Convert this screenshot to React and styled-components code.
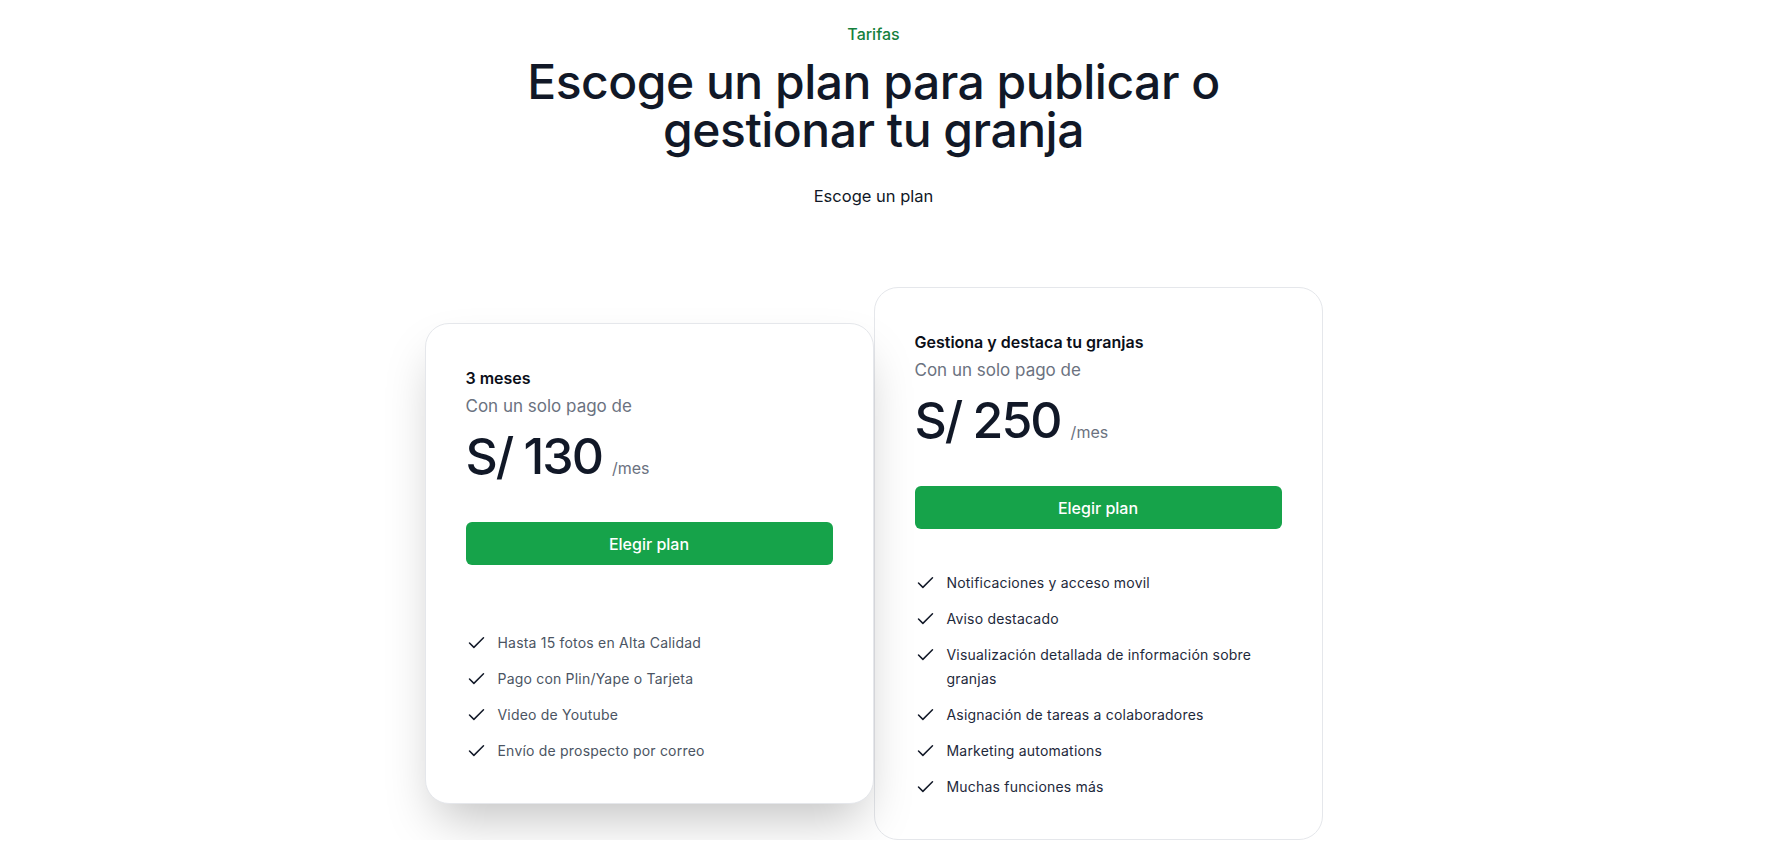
import React from "react";
import styled, { createGlobalStyle } from "styled-components";

const GlobalStyle = createGlobalStyle`
  body {
    margin: 0;
    background: #ffffff;
    font-family: Inter, "Liberation Sans", sans-serif;
    -webkit-font-smoothing: antialiased;
  }
`;

const plans = [
  {
    name: "3 meses",
    price: "S/ 130",
    featured: true,
    features: [
      "Hasta 15 fotos en Alta Calidad",
      "Pago con Plin/Yape o Tarjeta",
      "Video de Youtube",
      "Envío de prospecto por correo",
    ],
  },
  {
    name: "Gestiona y destaca tu granjas",
    price: "S/ 250",
    featured: false,
    features: [
      "Notificaciones y acceso movil",
      "Aviso destacado",
      "Visualización detallada de información sobre granjas",
      "Asignación de tareas a colaboradores",
      "Marketing automations",
      "Muchas funciones más",
    ],
  },
];

function CheckIcon() {
  return (
    <Check viewBox="0 0 24 24" fill="none" stroke="currentColor" strokeWidth="1.7" strokeLinecap="round" strokeLinejoin="round">
      <path d="M20 6 9 17l-5-5" />
    </Check>
  );
}

export default function App() {
  return (
    <>
      <GlobalStyle />
      <Page>
        <Eyebrow>Tarifas</Eyebrow>
        <Title>
          <span>Escoge un plan para publicar o</span>
          <span>gestionar tu granja</span>
        </Title>
        <Lead>Escoge un plan</Lead>
        <Cards>
          {plans.map((plan) => (
            <Card key={plan.price} $featured={plan.featured}>
              <PlanName>{plan.name}</PlanName>
              <PlanNote>Con un solo pago de</PlanNote>
              <PriceRow>
                <Amount>{plan.price}</Amount>
                <Per>/mes</Per>
              </PriceRow>
              <ChooseButton>Elegir plan</ChooseButton>
              <Features $featured={plan.featured}>
                {plan.features.map((f) => (
                  <Feature key={f}>
                    <CheckIcon />
                    <span>{f}</span>
                  </Feature>
                ))}
              </Features>
            </Card>
          ))}
        </Cards>
      </Page>
    </>
  );
}

const Page = styled.main`
  display: flex;
  flex-direction: column;
  align-items: center;
  padding: 20px 42px 0 0;
`;

const Eyebrow = styled.p`
  margin: 0;
  font-size: 16px;
  line-height: 28px;
  font-weight: 500;
  color: #15803d;
`;

const Title = styled.h2`
  display: flex;
  flex-direction: column;
  align-items: center;
  margin: 10px 0 0;
  font-size: 48px;
  line-height: 48px;
  font-weight: 500;
  letter-spacing: -0.5px;
  color: #111827;
  text-align: center;
`;

const Lead = styled.p`
  margin: 28px 0 0;
  font-size: 16.5px;
  line-height: 28px;
  color: #111827;
`;

const Cards = styled.div`
  display: flex;
  align-items: center;
  margin-top: 77px;
`;

const Card = styled.div`
  position: relative;
  z-index: ${(p) => (p.$featured ? 1 : 0)};
  box-sizing: border-box;
  width: 449px;
  padding: 40px;
  border-radius: 24px;
  border: 1px solid #e5e7eb;
  background: #ffffff;
  box-shadow: ${(p) => (p.$featured ? "0 25px 50px -12px rgba(0, 0, 0, 0.25)" : "none")};
`;

const PlanName = styled.h3`
  margin: 0;
  font-size: 16px;
  line-height: 28px;
  font-weight: 600;
  color: #0b0f19;
`;

const PlanNote = styled.p`
  margin: 0;
  font-size: 17px;
  line-height: 28px;
  color: #6b7280;
`;

const PriceRow = styled.p`
  display: flex;
  align-items: baseline;
  gap: 10px;
  margin: 8px 0 0;
`;

const Amount = styled.span`
  font-size: 50px;
  line-height: 56px;
  font-weight: 500;
  letter-spacing: -2px;
  color: #111827;
`;

const Per = styled.span`
  font-size: 16px;
  line-height: 24px;
  color: #6b7280;
`;

const ChooseButton = styled.button`
  display: block;
  width: 100%;
  margin-top: 38px;
  height: 43px;
  border: 0;
  border-radius: 6px;
  background: #16a34a;
  color: #ffffff;
  font-family: inherit;
  font-size: 16px;
  font-weight: 500;
  cursor: pointer;
`;

const Features = styled.ul`
  list-style: none;
  margin: ${(p) => (p.$featured ? "66px" : "42px")} 0 0;
  padding: 0;
  display: flex;
  flex-direction: column;
  gap: 12px;
  font-size: 14px;
  line-height: 24px;
  letter-spacing: 0.2px;
  color: ${(p) => (p.$featured ? "#4b5563" : "#1e293b")};
`;

const Feature = styled.li`
  display: flex;
  gap: 11px;
`;

const Check = styled.svg`
  flex: none;
  width: 21px;
  height: 24px;
  color: #111827;
`;
